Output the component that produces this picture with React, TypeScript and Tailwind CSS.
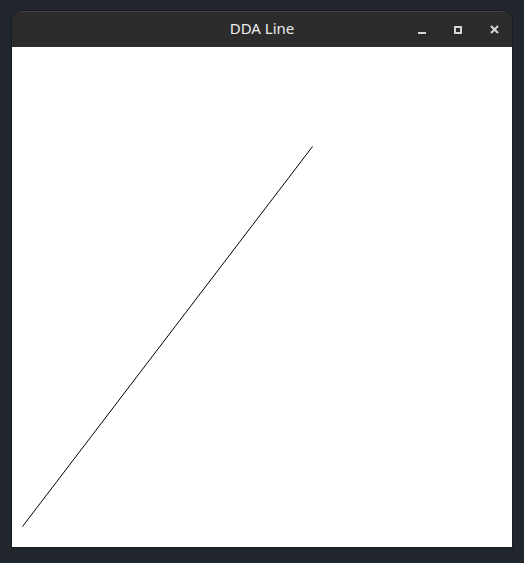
export default function App() {
  return (
    <div className="h-[563px] w-[524px] bg-[#21252c] pt-[11px] pl-[12px]">
      <div className="w-[500px] overflow-hidden rounded-t-[9px] shadow-[0_0_0_1px_rgba(0,0,0,0.25)]">
        {/* title bar */}
        <div className="relative flex h-[36px] items-center justify-center border-t border-[#3e3e3e] bg-[#2c2c2c]">
          <span className="pb-[3px] font-['Noto_Sans',sans-serif] text-[15px] text-[#ececec]">DDA Line</span>
          <div className="absolute right-0 top-0 flex h-full items-center">
            <div className="flex w-[36px] justify-center pt-[6px]">
              <div className="h-[2px] w-[8px] bg-[#d6d6d6]" />
            </div>
            <div className="flex w-[36px] justify-center">
              <div className="h-[8px] w-[8px] border-2 border-[#d6d6d6]" />
            </div>
            <div className="flex w-[36px] justify-center">
              <svg width="9" height="9" viewBox="0 0 9 9">
                <path d="M1 1L8 8M8 1L1 8" stroke="#d6d6d6" strokeWidth="2" />
              </svg>
            </div>
          </div>
        </div>
        {/* canvas */}
        <div className="h-[500px] w-[500px] bg-white">
          <svg width="500" height="500" viewBox="0 0 500 500">
            <line x1="10.5" y1="479.5" x2="300.5" y2="99.5" stroke="#000" strokeWidth="1" />
          </svg>
        </div>
      </div>
    </div>
  );
}
